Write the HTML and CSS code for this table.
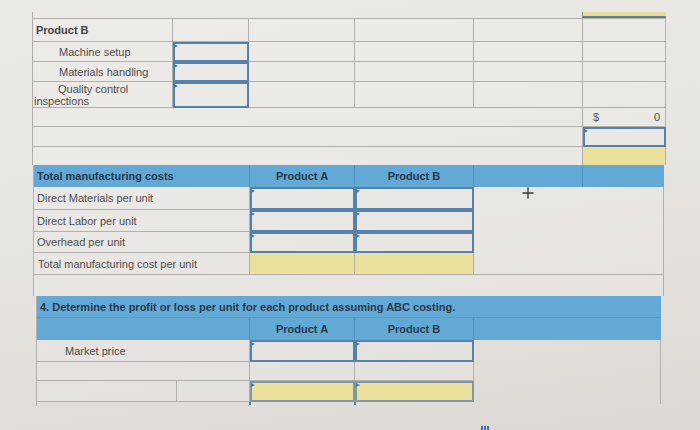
FILE: index.html
```html
<!DOCTYPE html>
<html>
<head>
<meta charset="utf-8">
<link rel="stylesheet" href="styles.css">
</head>
<body>
<div class="sheet">
  <section class="s1">
    <div class="cap"><div class="cap-y"></div></div>
    <div class="grid g1">
      <div class="c b">Product B</div><div class="c"></div><div class="c"></div><div class="c"></div><div class="c"></div><div class="c"></div>
      <div class="c ind">Machine setup</div><div class="c inp"></div><div class="c"></div><div class="c"></div><div class="c"></div><div class="c"></div>
      <div class="c ind">Materials handling</div><div class="c inp"></div><div class="c"></div><div class="c"></div><div class="c"></div><div class="c"></div>
      <div class="c wrap">Quality control inspections</div><div class="c inp"></div><div class="c"></div><div class="c"></div><div class="c"></div><div class="c"></div>
      <div class="c span5"></div><div class="c dollar"><span>$</span><span>0</span></div>
      <div class="c span5"></div><div class="c inp"></div>
      <div class="c span5 nb"></div><div class="c yel nb"></div>
    </div>
  </section>

  <section class="s2">
    <div class="grid g2">
      <div class="merged"><svg class="cursor" width="12" height="12" viewBox="0 0 12 12"><path d="M6 0.5V11.5M0.5 6H11.5" stroke="#3a3a3a" stroke-width="1.4" fill="none"/></svg></div>
      <div class="h b">Total manufacturing costs</div><div class="h b ctr">Product A</div><div class="h b ctr">Product B</div><div class="h"></div><div class="h"></div>
      <div class="c">Direct Materials per unit</div><div class="c inp"></div><div class="c inp"></div>
      <div class="c">Direct Labor per unit</div><div class="c inp"></div><div class="c inp"></div>
      <div class="c">Overhead per unit</div><div class="c inp"></div><div class="c inp"></div>
      <div class="c lbl2">Total manufacturing cost per unit</div><div class="c yel"></div><div class="c yel"></div>
      <div class="c span5 nb"></div>
    </div>
  </section>

  <section class="s3">
    <div class="grid g3">
      <div class="merged3"></div>
      <div class="h b span5 h1">4. Determine the profit or loss per unit for each product assuming ABC costing.</div>
      <div class="h span2"></div><div class="h b ctr">Product A</div><div class="h b ctr">Product B</div><div class="h"></div>
      <div class="c span2 mp">Market price</div><div class="c inp"></div><div class="c inp"></div>
      <div class="c span2"></div><div class="c"></div><div class="c"></div>
      <div class="c"></div><div class="c"></div><div class="c yel inp"></div><div class="c yel inp"></div>
    </div>
    <div class="tail"><span class="tick t1"></span><span class="tick t2"></span></div>
  </section>
</div>
<div class="marks"><i></i><i></i><i></i></div>
</body>
</html>
```
FILE: styles.css
```css
* { box-sizing: border-box; margin: 0; padding: 0; }
:root { --line: #b3b0ab; --blue: #63a9d6; --bline: #4f94c2; --inp: #5482ad; --yel: #ebe09b; }
html, body { width: 700px; height: 430px; overflow: hidden; }
body {
  font-family: "Liberation Sans", Arial, sans-serif;
  font-size: 11px;
  color: #4d4d4d;
  background: linear-gradient(172deg, #ecEAE6 0%, #e7e5e1 45%, #e2dfdb 75%, #dcd8d5 100%);
  position: relative;
}
.sheet { padding-top: 12px; }

.s1 { margin-left: 32px; width: 634px; }
.cap { display: flex; justify-content: flex-end; height: 6px; border-left: 1px solid var(--line); }
.cap-y { width: 84px; background: #e9df9c; border-bottom: 2px solid #5f8290; border-left: 1px solid #7f8f96; }

.grid { display: grid; border-left: 1px solid var(--line); }
.g1 {
  grid-template-columns: 140px 76px 106px 119px 109px 83px;
  grid-template-rows: 23px 20px 20px 26px 19px 20px 18px;
  border-top: 1px solid var(--line);
}
.c {
  border-right: 1px solid var(--line);
  border-bottom: 1px solid var(--line);
  display: flex;
  align-items: center;
  padding-left: 3px;
  position: relative;
  white-space: nowrap;
  background: rgba(255, 255, 255, 0.12);
}
.nb { border-bottom: none; }
.b { font-weight: bold; }
.s1 .b { color: #444; }
.ind { padding-left: 26px; }
.wrap { white-space: normal; text-indent: 24px; line-height: 12px; padding-left: 1px; }
.span5 { grid-column: span 5; }
.span2 { grid-column: span 2; }
.dollar { justify-content: space-between; padding: 0 5px 0 10px; color: #555; }
.yel { background: var(--yel); }
.inp { outline: 2px solid var(--inp); outline-offset: -2px; }
.inp::before {
  content: "";
  position: absolute;
  left: 1px;
  top: 2px;
  border-left: 4px solid #3b7cc0;
  border-top: 2.5px solid transparent;
  border-bottom: 2.5px solid transparent;
}
.yel.inp { outline-color: #7f97a8; }

.s2 { margin-left: 33px; width: 631px; }
.g2 {
  grid-template-columns: 216px 105px 119px 109px 81px;
  grid-template-rows: 22px 23px 22px 21px 22px 21px;
}
.h {
  background: var(--blue);
  color: #27384a;
  display: flex;
  align-items: center;
  padding-left: 3px;
  border-right: 1px solid var(--bline);
  white-space: nowrap;
}
.h:last-child, .g2 .h:nth-child(6) { border-right: none; }
.ctr { justify-content: center; padding-left: 0; }
.merged {
  grid-column: 4 / 6;
  grid-row: 2 / 6;
  border-right: 1px solid var(--line);
  border-bottom: 1px solid var(--line);
  position: relative;
  background: rgba(255, 255, 255, 0.12);
}
.cursor { position: absolute; left: 48px; top: 0; }
.lbl2 { padding-left: 4px; }

.s3 { margin-left: 36px; width: 625px; }
.g3 {
  grid-template-columns: 140px 73px 105px 119px 187px;
  grid-template-rows: 22px 22px 22px 19px 21px;
}
.h1 { border-right: none; border-bottom: 1px solid #5a9dca; padding-left: 3px; }
.g3 .h:nth-child(6) { border-right: none; }
.merged3 {
  grid-column: 5 / 6;
  grid-row: 3 / 6;
  border-right: 1px solid var(--line);
  margin-bottom: -2px;
}
.mp { padding-left: 28px; }
.tail { height: 4px; border-left: 1px solid var(--line); position: relative; }
.tick { position: absolute; top: 0; width: 2px; height: 3px; background: #5482ad; }
.t1 { left: 212px; }
.t2 { left: 317px; }

.marks { position: absolute; left: 481px; top: 426px; display: flex; gap: 1px; }
.marks i { display: block; width: 2px; height: 4px; background: #3d6fd0; }
```
